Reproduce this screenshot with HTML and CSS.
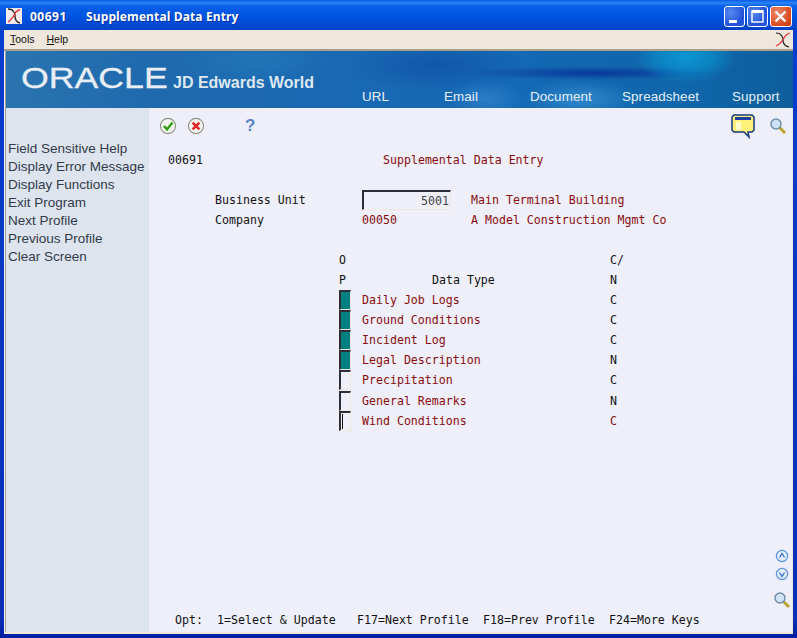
FILE: index.html
```html
<!DOCTYPE html>
<html lang="en">
<head>
<meta charset="utf-8">
<title>00691 Supplemental Data Entry</title>
<link rel="stylesheet" href="styles.css">
</head>
<body>
<div class="window">
  <header class="titlebar">
    <svg class="app-icon" width="16" height="16" viewBox="0 0 16 16"><rect width="16" height="16" fill="#f6ecec"/><path d="M2 1c6 0 7 5 7 7s1 6 5 7" fill="none" stroke="#222" stroke-width="1.3"/><path d="M14 2C9 2 9 7 7 9s-3 4-5 5" fill="none" stroke="#e03030" stroke-width="1.3"/></svg>
    <span class="title-code">00691</span>
    <span class="title-name">Supplemental Data Entry</span>
    <div class="win-buttons">
      <button class="win-btn"><svg width="21" height="21" viewBox="0 0 21 21"><rect x="5" y="14" width="8" height="3" fill="#fff"/></svg></button>
      <button class="win-btn"><svg width="21" height="21" viewBox="0 0 21 21"><rect x="5" y="5" width="11" height="11" fill="none" stroke="#fff" stroke-width="1.4"/><rect x="5" y="4" width="11" height="3" fill="#fff"/></svg></button>
      <button class="win-btn close"><svg width="21" height="21" viewBox="0 0 21 21"><path d="M5.5 5.5l10 10M15.5 5.5l-10 10" stroke="#fff" stroke-width="2.4"/></svg></button>
    </div>
  </header>
  <div class="frame">
    <nav class="menubar">
      <span class="menu-item"><u>T</u>ools</span>
      <span class="menu-item"><u>H</u>elp</span>
      <svg class="menu-logo" width="16" height="16" viewBox="0 0 16 16"><path d="M1 1c6 0 7 5 7 7s1 6 6 7" fill="none" stroke="#222" stroke-width="1.2"/><path d="M15 1C10 2 9 7 7 9s-3 4-6 5" fill="none" stroke="#e03030" stroke-width="1.2"/></svg>
    </nav>
    <div class="banner">
      <div class="brand"><span class="oracle">ORACLE</span><span class="jde">JD Edwards World</span></div>
      <div class="banner-nav">
        <span>URL</span><span>Email</span><span>Document</span><span>Spreadsheet</span><span>Support</span>
      </div>
    </div>
    <div class="content">
      <aside class="sidebar">
        <a>Field Sensitive Help</a>
        <a>Display Error Message</a>
        <a>Display Functions</a>
        <a>Exit Program</a>
        <a>Next Profile</a>
        <a>Previous Profile</a>
        <a>Clear Screen</a>
      </aside>
      <main class="main">
        <div class="toolbar">
          <svg width="18" height="18" viewBox="0 0 18 18"><circle cx="9" cy="9" r="7.6" fill="#f3f3ee" stroke="#8b9186" stroke-width="1.1"/><path d="M5 9l3 3.4L13.5 5.6" fill="none" stroke="#2f9e12" stroke-width="2.4"/></svg>
          <svg class="tool-x" width="18" height="18" viewBox="0 0 18 18"><circle cx="9" cy="9" r="7.6" fill="#f3f3ee" stroke="#8b9186" stroke-width="1.1"/><path d="M5.6 5.6l6.8 6.8M12.4 5.6l-6.8 6.8" stroke="#e02828" stroke-width="2.6"/></svg>
          <span class="help-mark">?</span>
          <div class="tool-right">
            <svg width="26" height="26" viewBox="0 0 26 26"><path d="M4 2h18l2 2v13l-2 2h-4l1 5-5-5H4l-2-2V4z" fill="#fff27a" stroke="#123a80" stroke-width="1.5"/><rect x="5" y="4" width="16" height="3" fill="#1c3fa0"/><rect x="6" y="9" width="5" height="8" fill="#fffcc8"/></svg>
            <svg class="lens" width="18" height="18" viewBox="0 0 18 18"><path d="M10.5 10.5L16 16" stroke="#b9a432" stroke-width="3"/><circle cx="7" cy="7" r="5" fill="#cfe3f7" stroke="#6f8ba5" stroke-width="1.4"/></svg>
          </div>
        </div>
        <div class="screen">
          <div class="row"><span class="c1">00691</span><span class="c5 red">Supplemental Data Entry</span></div>
          <div class="row"></div>
          <div class="row"><span class="c2">Business Unit</span><span class="c4 input">5001</span><span class="c7 red">Main Terminal Building</span></div>
          <div class="row"><span class="c2">Company</span><span class="c4 red">00050</span><span class="c7 red">A Model Construction Mgmt Co</span></div>
          <div class="row"></div>
          <div class="row"><span class="c3">O</span><span class="c8">C/</span></div>
          <div class="row"><span class="c3">P</span><span class="c6">Data Type</span><span class="c8">N</span></div>
          <div class="row"><span class="c3 opt on"></span><span class="c4 red">Daily Job Logs</span><span class="c8">C</span></div>
          <div class="row"><span class="c3 opt on"></span><span class="c4 red">Ground Conditions</span><span class="c8">C</span></div>
          <div class="row"><span class="c3 opt on"></span><span class="c4 red">Incident Log</span><span class="c8">C</span></div>
          <div class="row"><span class="c3 opt on"></span><span class="c4 red">Legal Description</span><span class="c8">N</span></div>
          <div class="row"><span class="c3 opt"></span><span class="c4 red">Precipitation</span><span class="c8">C</span></div>
          <div class="row shift"><span class="c3 opt"></span><span class="c4 red">General Remarks</span><span class="c8">N</span></div>
          <div class="row"><span class="c3 opt cursor"></span><span class="c4 red">Wind Conditions</span><span class="c8 red">C</span></div>
        </div>
        <div class="side-tools">
          <svg width="14" height="14" viewBox="0 0 14 14"><circle cx="7" cy="7" r="5.6" fill="#e4eefb" stroke="#5c93dc" stroke-width="1.2"/><path d="M4.5 8.5L7 4.5l2.5 4" fill="none" stroke="#2f6fc6" stroke-width="1.3"/></svg>
          <svg width="14" height="14" viewBox="0 0 14 14"><circle cx="7" cy="7" r="5.6" fill="#e4eefb" stroke="#5c93dc" stroke-width="1.2"/><path d="M4.5 5.5L7 9.5l2.5-4" fill="none" stroke="#2f6fc6" stroke-width="1.3"/></svg>
          <svg class="lens-low" width="18" height="18" viewBox="0 0 18 18"><path d="M10.5 10.5L16 16" stroke="#b9a432" stroke-width="3"/><circle cx="7" cy="7" r="5" fill="#cfe3f7" stroke="#6f8ba5" stroke-width="1.4"/></svg>
        </div>
        <div class="footer"><span>Opt:</span><span>1=Select &amp; Update</span><span>F17=Next Profile</span><span>F18=Prev Profile</span><span>F24=More Keys</span></div>
      </main>
    </div>
  </div>
</div>
</body>
</html>
```

FILE: styles.css
```css
* { box-sizing: border-box; }
html, body { margin: 0; height: 100%; overflow: hidden; }
.window { width: 797px; height: 638px; display: flex; flex-direction: column; padding: 0 4px 4px; background: linear-gradient(#0a3fd0, #0a2fb8 97%, #001ea0); position: relative; }

.titlebar { height: 30px; margin: 0 -4px; padding: 2px 5px 0 6px; display: flex; align-items: center; color: #fff; font: bold 12px "Open Sans", "Liberation Sans", sans-serif; text-shadow: 1px 1px 0 #0b2f9c; background: linear-gradient(#0a5ae8 0, #2b86f5 3px, #0a5fe6 6px, #0054e3 16px, #0348d0 26px, #0340c4 30px); }
.app-icon { margin-right: 9px; }
.title-code { width: 56px; letter-spacing: .5px; margin-left: -1px; }
.title-name { letter-spacing: .1px; }
.win-buttons { margin-left: auto; display: flex; gap: 2px; margin-top: 1px; }
.win-btn { width: 21px; height: 21px; padding: 0; border: 1px solid #fff; border-radius: 3px; background: radial-gradient(circle at 30% 30%, #5a8af0, #1f50d8 70%, #2a5fe0); display: block; }
.win-btn svg { display: block; margin: -1px; }
.win-btn.close { background: radial-gradient(circle at 30% 30%, #ec8a68, #d9481f 70%, #c83a12); width: 22px; }

.frame { flex: 1; display: flex; flex-direction: column; min-height: 0; background: #eeeff9; }
.menubar { height: 21px; display: flex; align-items: center; padding: 0 2px 1px 6px; gap: 12px; background: #efe6dc; border-bottom: 2px solid #a89f8d; font: 10.5px "Liberation Sans", sans-serif; color: #111; }
.menu-logo { margin-left: auto; margin-top: 2px; }

.banner { height: 57px; margin-left: 1px; border-left: 1px solid #a89f8d; position: relative; display: flex; justify-content: space-between; color: #e6eff7;
  background:
    radial-gradient(ellipse 50px 26px at 680px 6px, rgba(10,159,216,.85) 0, rgba(10,159,216,.5) 55%, rgba(10,159,216,0) 100%),
    radial-gradient(ellipse 130px 7px at 590px 22px, rgba(8,50,150,.9), rgba(8,50,150,0)),
    radial-gradient(ellipse 60px 20px at 575px 48px, rgba(60,150,215,.7), rgba(60,150,215,0)),
    radial-gradient(ellipse 40px 20px at 480px 48px, rgba(70,150,220,.45), rgba(70,150,220,0)),
    radial-gradient(ellipse 90px 26px at 430px 14px, rgba(15,80,165,.7), rgba(15,80,165,0)),
    radial-gradient(ellipse 80px 24px at 250px 10px, rgba(40,130,190,.5), rgba(40,130,190,0)),
    linear-gradient(90deg, #2a74b0 0, #1f6aae 18%, #1a68b2 40%, #1468b4 65%, #0f66aa 86%, #0e5e9c 100%);
}
.brand { display: flex; align-items: baseline; padding: 11px 0 0 15px; height: 40px; }
.oracle { display: inline-block; width: 152px; font: 29px "Liberation Sans", sans-serif; color: #e8eef4; transform: scaleX(1.23); transform-origin: 0 0; -webkit-text-stroke: .3px #e8eef4; }
.jde { font: bold 16px "Liberation Sans", sans-serif; color: #dde8f1; }
.banner-nav { position: absolute; left: 356px; bottom: 4px; display: grid; grid-template-columns: 82px 86px 92px 110px auto; font: 13.4px "Liberation Sans", sans-serif; letter-spacing: .1px; }

.content { flex: 1; display: flex; min-height: 0; border-bottom: 2px solid #efe6dc; border-right: 1px solid #efe6dc; }
.sidebar { width: 144px; margin-left: 1px; padding-top: 32px; border-left: 1px solid #a89f8d; padding-left: 2px; background: #dde4ee; display: flex; flex-direction: column; font: 13.5px/18px "Liberation Sans", sans-serif; color: #333b4a; white-space: nowrap; }
.main { flex: 1; position: relative; display: flex; flex-direction: column; min-width: 0; }
.toolbar { height: 32px; padding: 3px 5px 0 10px; display: flex; align-items: center; gap: 10px; }
.help-mark { margin-left: 30px; font: bold 17px "Liberation Sans", sans-serif; color: #5a82c8; }
.tool-right { margin-left: auto; display: flex; align-items: center; gap: 13px; }

.screen { margin-top: 10px; font: 11.6px/20px "DejaVu Sans Mono", monospace; color: #111; }
.row { height: 20px; display: grid; padding-left: 19px; grid-template-columns: 47px 124px 23px 21px 49px 39px 139px 1fr; white-space: nowrap; }
.row > span { grid-row: 1; min-width: 0; }
.shift { margin-top: 1px; }
.c1 { grid-column: 1; }
.c2 { grid-column: 2; }
.c3 { grid-column: 3; }
.c4 { grid-column: 4 / span 4; }
.c5 { grid-column: 5 / span 4; }
.c6 { grid-column: 6 / span 2; }
.c7 { grid-column: 7 / span 2; }
.c8 { grid-column: 8; }
.red { color: #8a0c0c; }
.input { width: 89px; height: 20px; text-align: right; padding-right: 1px; color: #444; border-top: 2px solid #2e2e38; border-left: 2px solid #2e2e38; border-right: 1px solid #efe6dc; border-bottom: 1px solid #efe6dc; line-height: 18px; }
.opt { width: 12px; height: 20px; border-top: 2px solid #2e2e38; border-left: 2px solid #2e2e38; border-right: 1px solid #efe6dc; border-bottom: 1px solid #efe6dc; }
.opt.on { background: #008080; }
.opt.cursor { position: relative; }
.opt.cursor::after { content: ""; position: absolute; left: 1px; top: 1px; bottom: 1px; width: 1px; background: #111; }

.side-tools { position: absolute; right: 1px; bottom: 23px; display: flex; flex-direction: column; align-items: center; gap: 4px; }
.lens-low { margin-top: 6px; }
.footer { margin-top: auto; height: 20px; margin-bottom: 2px; padding-left: 26px; font: 11.6px/20px "DejaVu Sans Mono", monospace; color: #111; display: flex; white-space: nowrap; }
.footer span:nth-child(1) { width: 42px; }
.footer span:nth-child(2) { width: 140px; }
.footer span:nth-child(3) { width: 126px; }
.footer span:nth-child(4) { width: 126px; }
```
